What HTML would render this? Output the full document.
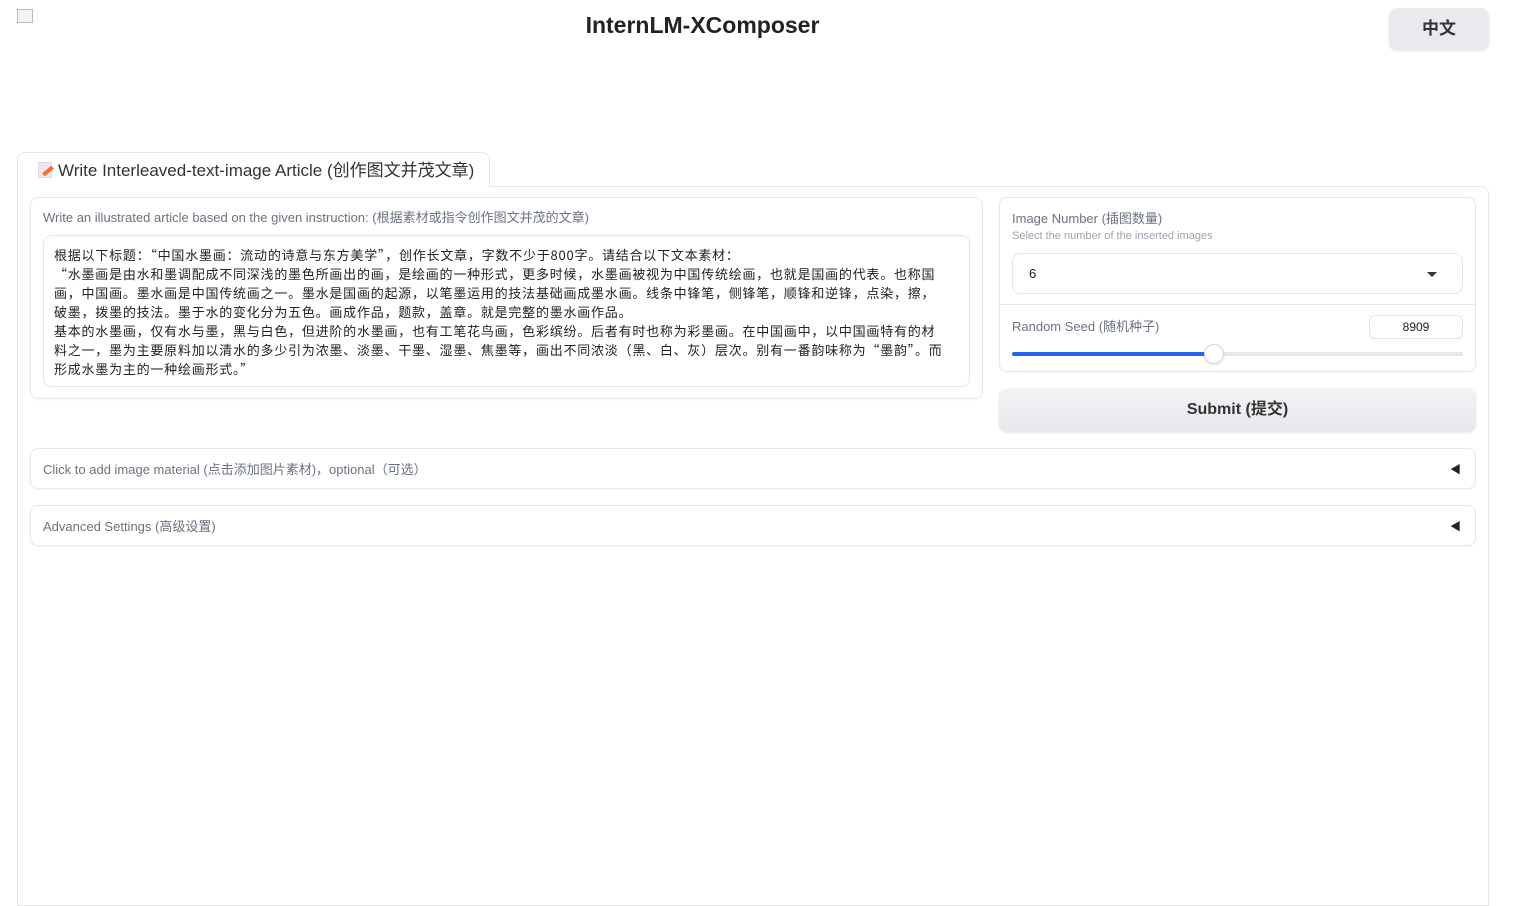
<!DOCTYPE html>
<html><head><meta charset="utf-8"><style>
*{box-sizing:border-box;margin:0;padding:0}
body{width:1519px;height:895px;background:#fff;font-family:"Liberation Sans","Noto Sans CJK SC",sans-serif;color:#374151;position:relative;overflow:hidden}
.abs{position:absolute}
.title{left:0;width:1405px;top:12px;text-align:center;font-size:23px;font-weight:bold;color:#222}
.lang{left:1389px;top:8px;width:100px;height:42px;background:#e9eaee;border-radius:8px;box-shadow:0 1px 2px rgba(0,0,0,.1);text-align:center;line-height:42px;font-weight:bold;font-size:17px;color:#333}
.tab{left:17px;top:152px;width:473px;height:35px;border:1px solid #e5e7eb;border-bottom:none;border-radius:8px 8px 0 0;background:#fff;font-size:17px;line-height:35px;padding-left:20px;color:#333;z-index:2;white-space:nowrap}
.panel{left:17px;top:186px;width:1472px;height:720px;border:1px solid #e5e7eb;border-radius:0 8px 0 0}
.box{border:1px solid #e5e7eb;border-radius:8px;background:#fff;box-shadow:0 1px 2px rgba(0,0,0,.04)}
.lbl{font-size:13px;color:#6b7280}
.ta{left:43px;top:235px;width:927px;height:152px;border:1px solid #e5e7eb;border-radius:8px;padding:9px 10px;font-size:13px;line-height:19px;color:#222;box-shadow:inset 0 1px 2px rgba(0,0,0,.04);white-space:nowrap;overflow:hidden;font-family:"Noto Sans CJK SC","Liberation Sans",sans-serif;letter-spacing:0.77px}
</style></head><body>
<div class="abs" style="left:17px;top:9px;width:16px;height:14px;border:1px solid #bbb;background:#f3f3f3"></div>
<div class="abs title">InternLM-XComposer</div>
<div class="abs lang">中文</div>
<div class="abs tab"><span style="display:inline-block;width:14px;height:16px;background:#f0e6f0;border:1px solid #ddd;vertical-align:-2px;position:relative;margin-right:6px"><span style="position:absolute;left:3px;top:6px;width:12px;height:4px;background:#f07030;transform:rotate(-40deg)"></span></span>Write Interleaved-text-image Article (创作图文并茂文章)</div>
<div class="abs panel"></div>
<div class="abs box" style="left:30px;top:197px;width:953px;height:202px"></div>
<div class="abs lbl" style="left:43px;top:207px">Write an illustrated article based on the given instruction: (根据素材或指令创作图文并茂的文章)</div>
<div class="abs ta">根据以下标题：“中国水墨画：流动的诗意与东方美学”，创作长文章，字数不少于800字。请结合以下文本素材：<br>“水墨画是由水和墨调配成不同深浅的墨色所画出的画，是绘画的一种形式，更多时候，水墨画被视为中国传统绘画，也就是国画的代表。也称国<br>画，中国画。墨水画是中国传统画之一。墨水是国画的起源，以笔墨运用的技法基础画成墨水画。线条中锋笔，侧锋笔，顺锋和逆锋，点染，擦，<br>破墨，拨墨的技法。墨于水的变化分为五色。画成作品，题款，盖章。就是完整的墨水画作品。<br>基本的水墨画，仅有水与墨，黑与白色，但进阶的水墨画，也有工笔花鸟画，色彩缤纷。后者有时也称为彩墨画。在中国画中，以中国画特有的材<br>料之一，墨为主要原料加以清水的多少引为浓墨、淡墨、干墨、湿墨、焦墨等，画出不同浓淡（黑、白、灰）层次。别有一番韵味称为“墨韵”。而<br>形成水墨为主的一种绘画形式。”</div>
<div class="abs box" style="left:999px;top:197px;width:477px;height:175px"></div>
<div class="abs lbl" style="left:1012px;top:208px">Image Number (插图数量)</div>
<div class="abs" style="left:1012px;top:230px;font-size:11px;color:#9ca3af">Select the number of the inserted images</div>
<div class="abs" style="left:1012px;top:253px;width:451px;height:41px;border:1px solid #e5e7eb;border-radius:8px;font-size:13px;line-height:40px;padding-left:16px;color:#222">6<span style="position:absolute;right:25px;top:18px;border:5px solid transparent;border-top:5px solid #333;border-bottom:none"></span></div>
<div class="abs" style="left:1000px;top:304px;width:475px;border-top:1px solid #e5e7eb"></div>
<div class="abs lbl" style="left:1012px;top:316px">Random Seed (随机种子)</div>
<div class="abs" style="left:1369px;top:315px;width:94px;height:24px;border:1px solid #e5e7eb;border-radius:6px;text-align:center;font-size:12px;line-height:22px;color:#222">8909</div>
<div class="abs" style="left:1012px;top:352px;width:451px;height:4px;background:#e5e7eb;border-radius:2px"></div>
<div class="abs" style="left:1012px;top:352px;width:202px;height:4px;background:#2563eb;border-radius:2px"></div>
<div class="abs" style="left:1204px;top:344px;width:20px;height:20px;border-radius:50%;background:#fff;border:1px solid #d1d5db;box-shadow:0 1px 2px rgba(0,0,0,.1)"></div>
<div class="abs" style="left:999px;top:388px;width:477px;height:44px;border-radius:8px;background:linear-gradient(#f3f4f6,#e5e7eb);box-shadow:0 1px 2px rgba(0,0,0,.1);text-align:center;line-height:44px;font-size:16px;font-weight:bold;color:#333">Submit (提交)</div>
<div class="abs box" style="left:30px;top:448px;width:1446px;height:41px"></div>
<div class="abs lbl" style="left:43px;top:459px">Click to add image material (点击添加图片素材)，optional（可选）</div>
<div class="abs" style="left:1450px;top:461px;font-size:11px;color:#222">◀</div>
<div class="abs box" style="left:30px;top:505px;width:1446px;height:41px"></div>
<div class="abs lbl" style="left:43px;top:516px">Advanced Settings (高级设置)</div>
<div class="abs" style="left:1450px;top:518px;font-size:11px;color:#222">◀</div>
</body></html>
